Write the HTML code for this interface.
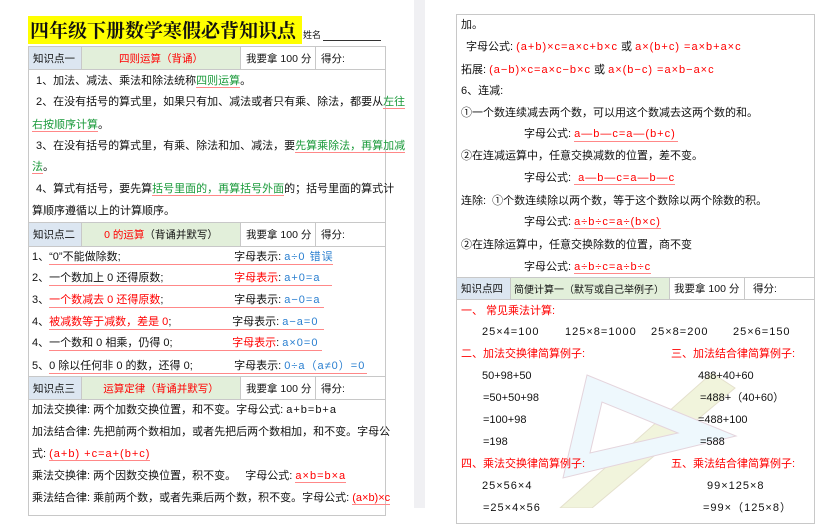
<!DOCTYPE html>
<html><head><meta charset="utf-8"><style>
*{margin:0;padding:0;box-sizing:border-box}
body{width:833px;height:508px;overflow:hidden;background:#fff;position:relative;font-family:"Liberation Sans","Noto Sans CJK SC",sans-serif;font-size:11px;color:#111}
.a{position:absolute;white-space:nowrap;line-height:14px}
.r{color:#f00}.g{color:#1a9a3a}.b{color:#2a7fd0}
.u{border-bottom:1px solid #f88}
.f{letter-spacing:1px}
.hb{position:absolute;border:1px solid #c8c8c8;font-size:10.5px}
.c{position:absolute;top:0;bottom:0;border-right:1px solid #c8c8c8;display:flex;align-items:center;padding-left:4px;white-space:nowrap;overflow:hidden}
</style></head><body>
<div style="position:absolute;left:414px;top:0;width:11px;height:508px;background:#f0f0f3"></div>
<!-- LEFT PAGE -->
<div class="a" style="left:28px;top:16px;width:274px;height:28px;background:#ffff00;font-size:19px;line-height:28px;font-weight:bold;font-family:'Noto Serif CJK SC','Liberation Serif',serif;padding-left:2px">四年级下册数学寒假必背知识点</div>
<div class="a" style="left:303px;top:28px;font-size:9px">姓名</div>
<div style="position:absolute;left:323px;top:40px;width:58px;border-bottom:1px solid #333"></div>
<div style="position:absolute;left:28px;top:46px;width:358px;height:470px;border:1px solid #c8c8c8"></div>

<div class="hb" style="left:28px;top:46px;width:358px;height:24px">
<div class="c" style="left:0;width:53px;background:#dce6f1">知识点一</div>
<div class="c r" style="left:53px;width:159px;background:#e2efda;justify-content:center;padding:0">四则运算（背诵）</div>
<div class="c" style="left:212px;width:75px;padding-left:5px">我要拿 100 分</div>
<div class="c" style="left:287px;width:70px;border:none;padding-left:5px">得分:</div></div>
<div class="a" style="left:36px;top:74px">1、加法、减法、乘法和除法统称<span class="g u">四则运算</span>。</div>
<div class="a" style="left:36px;top:95px">2、在没有括号的算式里，如果只有加、减法或者只有乘、除法，都要从<span class="g u">左往</span></div>
<div class="a" style="left:32px;top:118px"><span class="g u">右按顺序计算</span>。</div>
<div class="a" style="left:36px;top:139px">3、在没有括号的算式里，有乘、除法和加、减法，要<span class="g u">先算乘除法，再算加减</span></div>
<div class="a" style="left:32px;top:160px"><span class="g u">法</span>。</div>
<div class="a" style="left:36px;top:182px">4、算式有括号，要先算<span class="g u">括号里面的，再算括号外面</span>的；括号里面的算式计</div>
<div class="a" style="left:32px;top:204px">算顺序遵循以上的计算顺序。</div>

<div class="hb" style="left:28px;top:222px;width:358px;height:25px">
<div class="c" style="left:0;width:53px;background:#dce6f1">知识点二</div>
<div class="c" style="left:53px;width:159px;background:#e2efda;justify-content:center;padding:0"><span class="r">0 的运算</span>（背诵并默写）</div>
<div class="c" style="left:212px;width:75px;padding-left:5px">我要拿 100 分</div>
<div class="c" style="left:287px;width:70px;border:none;padding-left:5px">得分:</div></div>
<div class="a" style="left:32px;top:250px">1、<span class="u" style="display:inline-block;width:185px">“0”不能做除数;</span><span class="u" style="display:inline-block;width:99px">字母表示: <span class="b f">a÷0 错误</span></span></div>
<div class="a" style="left:32px;top:271px">2、<span class="u" style="display:inline-block;width:185px">一个数加上 0 还得原数;</span><span class="u" style="display:inline-block;width:98px"><span class="r">字母表示</span>: <span class="b f">a+0=a</span></span></div>
<div class="a" style="left:32px;top:293px">3、<span class="u r" style="display:inline-block;width:185px">一个数减去 0 还得原数<span style="color:#111">;</span></span><span class="u" style="display:inline-block;width:90px">字母表示: <span class="b f">a−0=a</span></span></div>
<div class="a" style="left:32px;top:315px">4、<span class="u r" style="display:inline-block;width:183px">被减数等于减数，差是 0<span style="color:#111">;</span></span><span class="u" style="display:inline-block;width:92px">字母表示: <span class="b f">a−a=0</span></span></div>
<div class="a" style="left:32px;top:336px">4、<span class="u" style="display:inline-block;width:183px">一个数和 0 相乘，仍得 0;</span><span class="u" style="display:inline-block;width:90px"><span class="r">字母表示</span>: <span class="b f">a×0=0</span></span></div>
<div class="a" style="left:32px;top:359px">5、<span class="u" style="display:inline-block;width:185px">0 除以任何非 0 的数，还得 0;</span><span class="u" style="display:inline-block;width:133px">字母表示: <span class="b f">0÷a（a≠0）=0</span></span></div>

<div class="hb" style="left:28px;top:376px;width:358px;height:24px">
<div class="c" style="left:0;width:53px;background:#dce6f1">知识点三</div>
<div class="c r" style="left:53px;width:159px;background:#e2efda;justify-content:center;padding:0">运算定律（背诵并默写）</div>
<div class="c" style="left:212px;width:75px;padding-left:5px">我要拿 100 分</div>
<div class="c" style="left:287px;width:70px;border:none;padding-left:5px">得分:</div></div>
<div class="a" style="left:32px;top:403px">加法交换律: 两个加数交换位置，和不变。字母公式: <span class="f">a+b=b+a</span></div>
<div class="a" style="left:32px;top:425px">加法结合律: 先把前两个数相加，或者先把后两个数相加，和不变。字母公</div>
<div class="a" style="left:32px;top:447px">式: <span class="r u f">(a+b) +c=a+(b+c)</span></div>
<div class="a" style="left:32px;top:469px">乘法交换律: 两个因数交换位置，积不变。 &nbsp; 字母公式: <span class="r u f">a×b=b×a</span></div>
<div class="a" style="left:32px;top:491px">乘法结合律: 乘前两个数，或者先乘后两个数，积不变。字母公式: <span class="r u">(a×b)×c</span></div>

<!-- RIGHT PAGE -->
<div style="position:absolute;left:456px;top:14px;width:359px;height:510px;border:1px solid #c8c8c8"></div>
<svg style="position:absolute;left:0;top:0" width="833" height="508">
<polygon points="712,373 735,388 592,508 560,508" fill="#f1f4dc" stroke="#e4e0cc" stroke-width="1"/>
<path d="M587,375 L736,436 L563,478 Z M602,402 L590,453 L678,433 Z" fill="#eef8fd" fill-rule="evenodd" stroke="#e4d4dc" stroke-width="1"/>
</svg>
<div class="a" style="left:461px;top:18px">加。</div>
<div class="a" style="left:466px;top:40px">字母公式: <span class="r f">(a+b)×c=a×c+b×c</span> 或 <span class="r f">a×(b+c) =a×b+a×c</span></div>
<div class="a" style="left:461px;top:63px">拓展: <span class="r f">(a−b)×c=a×c−b×c</span> 或 <span class="r f">a×(b−c) =a×b−a×c</span></div>
<div class="a" style="left:461px;top:84px">6、连减:</div>
<div class="a" style="left:461px;top:106px">①一个数连续减去两个数，可以用这个数减去这两个数的和。</div>
<div class="a" style="left:524px;top:127px">字母公式: <span class="r u f" style="display:inline-block;width:104px">a—b—c=a—(b+c)</span></div>
<div class="a" style="left:461px;top:149px">②在连减运算中，任意交换减数的位置，差不变。</div>
<div class="a" style="left:524px;top:171px">字母公式: <span class="r u f">&nbsp;a—b—c=a—b—c</span></div>
<div class="a" style="left:461px;top:194px">连除: &nbsp;①个数连续除以两个数，等于这个数除以两个除数的积。</div>
<div class="a" style="left:524px;top:215px">字母公式: <span class="r u f">a÷b÷c=a÷(b×c)</span></div>
<div class="a" style="left:461px;top:238px">②在连除运算中，任意交换除数的位置，商不变</div>
<div class="a" style="left:524px;top:260px">字母公式: <span class="r u f">a÷b÷c=a÷b÷c</span></div>

<div class="hb" style="left:456px;top:277px;width:359px;height:23px">
<div class="c" style="left:0;width:54px;background:#dce6f1">知识点四</div>
<div class="c" style="left:54px;width:159px;background:#e2efda;font-size:10px;padding-left:3px">简便计算一（默写或自己举例子）</div>
<div class="c" style="left:213px;width:75px">我要拿 100 分</div>
<div class="c" style="left:288px;width:70px;border:none;padding-left:8px">得分:</div></div>
<div class="a r" style="left:461px;top:304px">一、 常见乘法计算:</div>
<div class="a f" style="left:482px;top:325px">25×4=100</div>
<div class="a f" style="left:565px;top:325px">125×8=1000</div>
<div class="a f" style="left:651px;top:325px">25×8=200</div>
<div class="a f" style="left:733px;top:325px">25×6=150</div>
<div class="a r" style="left:461px;top:347px">二、加法交换律简算例子:</div>
<div class="a r" style="left:671px;top:347px">三、加法结合律简算例子:</div>
<div class="a" style="left:482px;top:369px">50+98+50</div>
<div class="a" style="left:698px;top:369px">488+40+60</div>
<div class="a" style="left:483px;top:391px">=50+50+98</div>
<div class="a" style="left:700px;top:391px">=488+（40+60）</div>
<div class="a" style="left:483px;top:413px">=100+98</div>
<div class="a" style="left:698px;top:413px">=488+100</div>
<div class="a" style="left:483px;top:435px">=198</div>
<div class="a" style="left:700px;top:435px">=588</div>
<div class="a r" style="left:461px;top:457px">四、乘法交换律简算例子:</div>
<div class="a r" style="left:671px;top:457px">五、乘法结合律简算例子:</div>
<div class="a f" style="left:482px;top:479px">25×56×4</div>
<div class="a f" style="left:707px;top:479px">99×125×8</div>
<div class="a f" style="left:483px;top:501px">=25×4×56</div>
<div class="a f" style="left:703px;top:501px">=99×（125×8）</div>
</body></html>
